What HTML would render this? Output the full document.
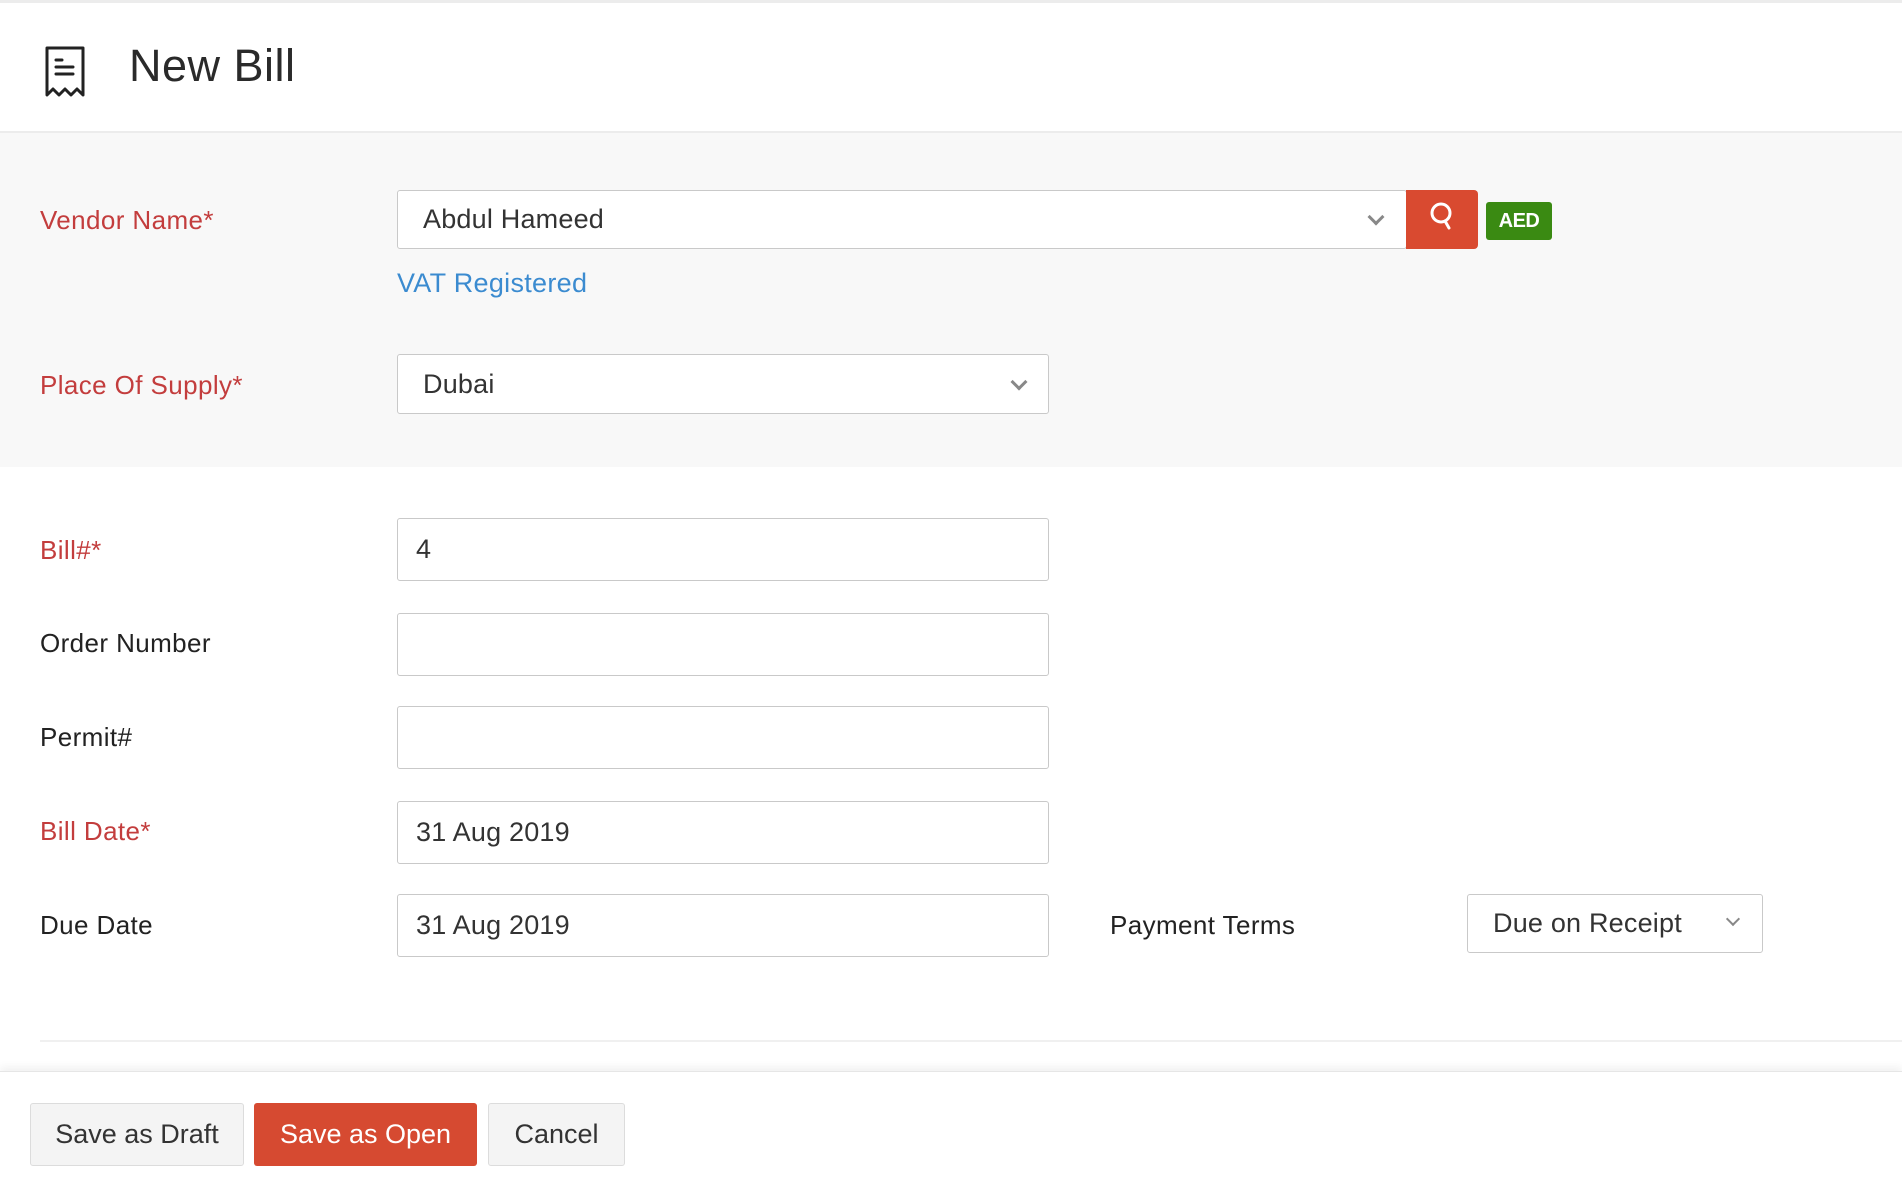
<!DOCTYPE html>
<html><head><meta charset="utf-8"><style>
*{box-sizing:border-box;margin:0;padding:0}
body{width:1902px;height:1192px;position:relative;overflow:hidden;background:#fff;font-family:"Liberation Sans",Arial,sans-serif;color:#222}
.a{position:absolute}
.lbl{position:absolute;left:40px;font-size:26px;line-height:30px;color:#222;letter-spacing:0.4px}
.req{color:#c33d3d}
.inp{position:absolute;left:397px;width:652px;background:#fff;border:1.5px solid #c9c9c9;border-radius:3px;font-size:27px;color:#333;padding-left:18px;display:flex;align-items:center;letter-spacing:0.2px}
.chev{position:absolute;width:12px;height:12px;border-right:3px solid #888;border-bottom:3px solid #888;transform:rotate(45deg)}
.btn{position:absolute;top:1103px;height:63px;border-radius:3px;font-size:27px;display:flex;align-items:center;justify-content:center}
</style></head><body>
<div class="a" style="left:0;top:0;width:1902px;height:3px;background:#ececec"></div>
<svg class="a" style="left:44px;top:44px" width="42" height="54" viewBox="0 0 42 54" fill="none" stroke="#222" stroke-width="3" stroke-linejoin="round" stroke-linecap="round">
<path d="M3 51V4h36v47l-6-6-6 6-6-6-6 6-6-6z"/><path d="M12 16h6M12 23h17M12 30h17"/></svg>
<div class="a" style="left:129px;top:38px;font-size:45px;line-height:56px;color:#2a2a2a;letter-spacing:0.5px">New Bill</div>
<div class="a" style="left:0;top:131px;width:1902px;height:2px;background:#ececec"></div>
<div class="a" style="left:0;top:133px;width:1902px;height:334px;background:#f8f8f8"></div>

<div class="lbl req" style="top:205px">Vendor Name*</div>
<div class="inp" style="top:190px;width:1010px;height:59px;padding-left:25px">Abdul Hameed</div>
<div class="chev" style="left:1370px;top:211px"></div>
<div class="a" style="left:1406px;top:190px;width:72px;height:59px;background:#d94a30;border-radius:0 4px 4px 0"></div>
<svg class="a" style="left:1428px;top:202px" width="28" height="30" viewBox="0 0 28 30" fill="none" stroke="#fff" stroke-width="3" stroke-linecap="round"><circle cx="13" cy="11" r="9"/><path d="M17 19l4 7"/></svg>
<div class="a" style="left:1486px;top:202px;width:66px;height:38px;background:#3a8a12;border-radius:3px;color:#fff;font-weight:bold;font-size:20px;display:flex;align-items:center;justify-content:center;letter-spacing:-0.5px">AED</div>
<div class="a" style="left:397px;top:267px;font-size:27px;line-height:32px;color:#3b8bd0;letter-spacing:0.3px">VAT Registered</div>

<div class="lbl req" style="top:370px">Place Of Supply*</div>
<div class="inp" style="top:354px;height:60px;padding-left:25px">Dubai</div>
<div class="chev" style="left:1013px;top:376px"></div>

<div class="lbl req" style="top:535px">Bill#*</div>
<div class="inp" style="top:518px;height:63px">4</div>
<div class="lbl" style="top:628px">Order Number</div>
<div class="inp" style="top:613px;height:63px"></div>
<div class="lbl" style="top:722px">Permit#</div>
<div class="inp" style="top:706px;height:63px"></div>
<div class="lbl req" style="top:816px">Bill Date*</div>
<div class="inp" style="top:801px;height:63px">31 Aug 2019</div>
<div class="lbl" style="top:910px">Due Date</div>
<div class="inp" style="top:894px;height:63px">31 Aug 2019</div>
<div class="a" style="left:1110px;top:910px;font-size:26px;line-height:30px;letter-spacing:0.4px">Payment Terms</div>
<div class="inp" style="left:1467px;top:894px;width:296px;height:59px;padding-left:25px">Due on Receipt</div>
<div class="chev" style="left:1728px;top:914px;width:10px;height:10px;border-width:2.5px"></div>

<div class="a" style="left:40px;top:1040px;width:1862px;height:2px;background:#f0f0f0"></div>
<div class="a" style="left:0;top:1071px;width:1902px;height:121px;background:#fff;box-shadow:0 -4px 8px rgba(0,0,0,0.06);border-top:1px solid #e6e6e6"></div>
<div class="btn" style="left:30px;width:214px;background:#f4f4f4;border:1.5px solid #dcdcdc;color:#333">Save as Draft</div>
<div class="btn" style="left:254px;width:223px;background:#d64a31;color:#fff">Save as Open</div>
<div class="btn" style="left:488px;width:137px;background:#f4f4f4;border:1.5px solid #dcdcdc;color:#333">Cancel</div>
</body></html>
